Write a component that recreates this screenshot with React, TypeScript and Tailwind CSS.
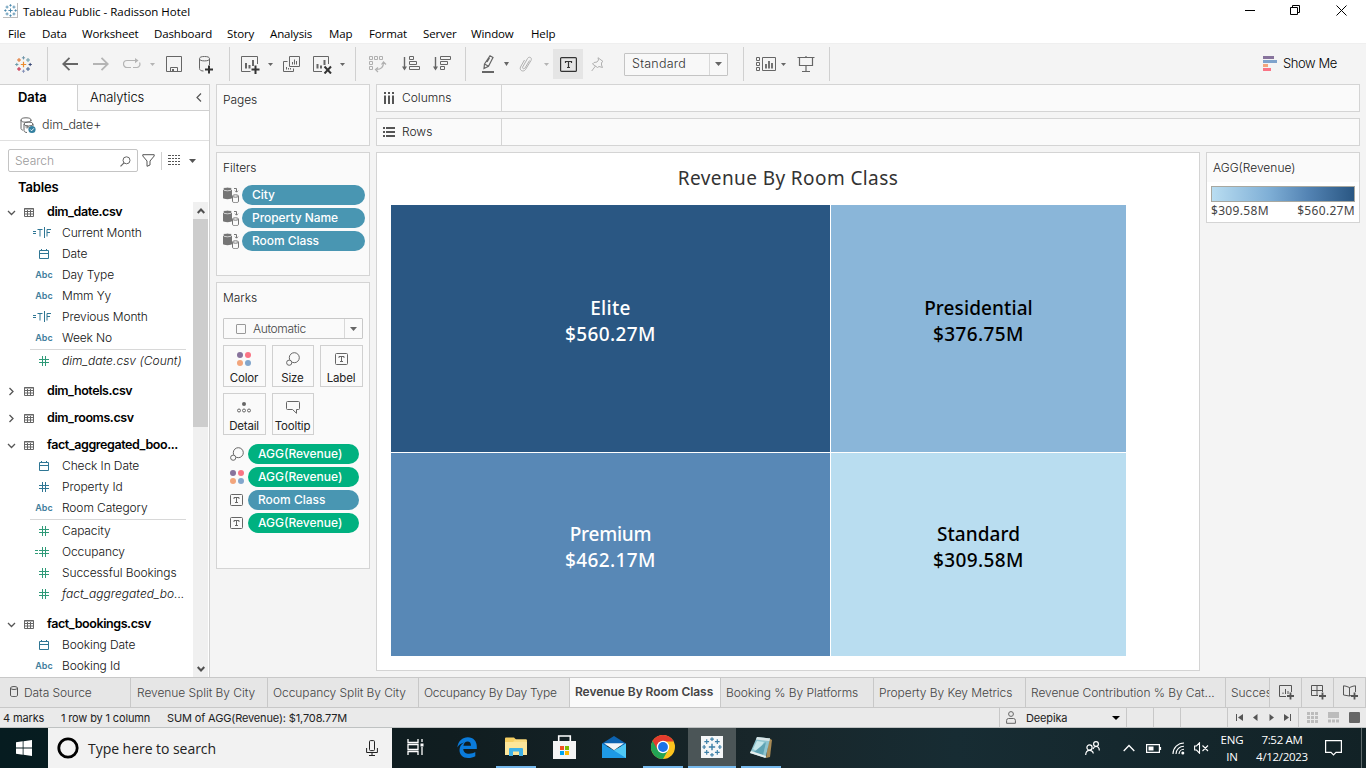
import React from 'react';

type Kids = { children?: React.ReactNode };

function Svg({ w, h, className = '', children }: { w: number; h: number; className?: string } & Kids) {
  return (
    <svg width={w} height={h} viewBox={`0 0 ${w} ${h}`} className={`block shrink-0 ${className}`} fill="none" stroke="currentColor">
      {children}
    </svg>
  );
}

/* ---------- shared icons ---------- */

function Plus({ x, y, s, c, sw = 1 }: { x: number; y: number; s: number; c: string; sw?: number }) {
  return <path d={`M${x - s} ${y}H${x + s}M${x} ${y - s}V${y + s}`} stroke={c} strokeWidth={sw} />;
}

function TableauLogo({ mono = false, size = 17 }: { mono?: boolean; size?: number }) {
  const c = mono
    ? ['#3c7fa6', '#3c7fa6', '#3c7fa6', '#3c7fa6', '#3c7fa6', '#3c7fa6', '#3c7fa6', '#3c7fa6', '#3c7fa6']
    : ['#eb8a2e', '#6b9ca8', '#8591b8', '#e0722a', '#3f5c8c', '#c6203e', '#3b4a78', '#6f95a8', '#7a6d9a'];
  return (
    <svg width={size} height={size} viewBox="0 0 17 17" className="block shrink-0" fill="none">
      <Plus x={8.5} y={8.5} s={2.7} c={c[0]} sw={1.2} />
      <Plus x={4} y={4} s={2} c={c[3]} />
      <Plus x={13} y={4} s={2} c={c[1]} />
      <Plus x={4} y={13} s={2} c={c[5]} />
      <Plus x={13} y={13} s={2} c={c[4]} />
      <Plus x={8.5} y={1.8} s={1.6} c={c[7]} />
      <Plus x={8.5} y={15.2} s={1.6} c={c[2]} />
      <Plus x={1.8} y={8.5} s={1.6} c={c[1]} />
      <Plus x={15.2} y={8.5} s={1.6} c={c[6]} />
    </svg>
  );
}

function Caret({ className = 'text-[#666]', w = 6, h = 4 }: { className?: string; w?: number; h?: number }) {
  return (
    <Svg w={w} h={h} className={className}>
      <path d={`M0 0H${w}L${w / 2} ${h}Z`} fill="currentColor" stroke="none" />
    </Svg>
  );
}

function Slot({ className, children }: { className: string } & Kids) {
  return <div className={`flex h-full shrink-0 items-center justify-center ${className}`}>{children}</div>;
}

function Sep({ className = '' }: { className?: string }) {
  return <div className={`h-[34px] w-px shrink-0 bg-[#d0d0d0] ${className}`} />;
}

function TIcon({ w = 13, h = 12, className = 'text-[#666]' }: { w?: number; h?: number; className?: string }) {
  const m = Math.floor(w / 2) + 0.5;
  return (
    <Svg w={w} h={h} className={className}>
      <rect x=".5" y=".5" width={w - 1} height={h - 1} rx="1" />
      <path d={`M${m - 2.5} 5V3.5H${m + 2.5}V5M${m} 3.5V${h - 3.5}M${m - 1.5} ${h - 3.5}H${m + 1.5}`} />
    </Svg>
  );
}

function SizeIcon() {
  return (
    <Svg w={14} h={14} className="text-[#666]">
      <circle cx="8.3" cy="5.7" r="5" />
      <circle cx="3.2" cy="10.7" r="2.6" fill="#fafafa" />
    </Svg>
  );
}

function ColorIcon() {
  return (
    <Svg w={14} h={14}>
      <g stroke="none">
        <circle cx="3" cy="3" r="3" fill="#87739c" />
        <circle cx="11" cy="3" r="3" fill="#fa7485" />
        <circle cx="3" cy="11" r="3" fill="#f2a57c" />
        <circle cx="11" cy="11" r="3" fill="#82a6cc" />
      </g>
    </Svg>
  );
}

/* ---------- title and menu ---------- */

const menu: [string, string][] = [
  ['File', 'w-[34px]'],
  ['Data', 'w-[40px]'],
  ['Worksheet', 'w-[72px]'],
  ['Dashboard', 'w-[73px]'],
  ['Story', 'w-[43px]'],
  ['Analysis', 'w-[59px]'],
  ['Map', 'w-[40px]'],
  ['Format', 'w-[54px]'],
  ['Server', 'w-[48px]'],
  ['Window', 'w-[60px]'],
  ['Help', 'w-[40px]'],
];

function TitleBar() {
  return (
    <div className="flex h-6 shrink-0 items-center bg-white pl-[3px] font-['Open_Sans',sans-serif] text-[11.5px] text-black">
      <div className="mt-[-3px] flex h-[15px] w-[15px] items-center justify-center border-r border-b border-[#bbb]">
        <TableauLogo mono size={13} />
      </div>
      <span className="ml-[5px] tracking-[-0.02px]">Tableau Public - Radisson Hotel</span>
      <div className="mr-[19px] ml-auto flex items-center pb-1 text-black">
        <Svg w={10} h={11}>
          <path d="M0 5.5H10" />
        </Svg>
        <Svg w={10} h={11} className="ml-[35px]">
          <path d="M.5 2.5H7.5V9.5H.5ZM2.500 2.500V.5H9.500V7.500H7.500" />
        </Svg>
        <Svg w={11} h={11} className="ml-[36px]">
          <path d="M.5 .5L10.5 10.5M10.5 .5L.5 10.5" />
        </Svg>
      </div>
    </div>
  );
}

function MenuBar() {
  return (
    <div className="flex h-[19px] shrink-0 items-center bg-white pl-2 font-['Open_Sans',sans-serif] text-[11.5px] tracking-[-0.14px] text-black">
      {menu.map(([t, w]) => (
        <span key={t} className={`shrink-0 whitespace-nowrap ${w}`}>
          {t}
        </span>
      ))}
    </div>
  );
}

/* ---------- toolbar ---------- */

function Toolbar() {
  return (
    <div className="flex h-[41px] shrink-0 items-center border-t border-[#efefef] bg-[#f4f4f4] text-[#666]">
      <Slot className="w-[47px]">
        <TableauLogo />
      </Slot>
      <Sep />
      <Slot className="ml-[7px] w-[30px]">
        <Svg w={16} h={14}>
          <path d="M16 7H1.2M7.5 .8L1.2 7L7.5 13.2" strokeWidth="1.8" />
        </Svg>
      </Slot>
      <Slot className="w-[32px] text-[#b4b4b4]">
        <Svg w={16} h={14}>
          <path d="M0 7H14.8M8.5 .8L14.8 7L8.5 13.2" strokeWidth="1.8" />
        </Svg>
      </Slot>
      <Slot className="w-[30px] text-[#b4b4b4]">
        <Svg w={18} h={12}>
          <path d="M8 9.5H4A3.5 3.5 0 0 1 4 2.5H13M10 9.5H14A3.4 3.4 0 0 0 16.5 4.5" strokeWidth="1.2" />
          <path d="M12 0L15.5 2.6L12 5.2Z" fill="currentColor" stroke="none" />
        </Svg>
      </Slot>
      <Slot className="w-[10px]">
        <Caret className="text-[#b4b4b4]" w={5} h={3} />
      </Slot>
      <Slot className="w-[34px]">
        <Svg w={16} h={16}>
          <path d="M.5 .5H15.5V15.5H.5ZM4.5 15.5V11.5H11.5V15.5" />
          <path d="M6 13H8V15.500H6Z" fill="currentColor" stroke="none" />
        </Svg>
      </Slot>
      <Slot className="w-[30px]">
        <Svg w={16} h={18} className="mt-0.5">
          <path d="M1.500 3V12.500C1.500 14 3 15 5.500 15M11.500 3V9" />
          <ellipse cx="6.500" cy="2.700" rx="5" ry="2.200" />
          <path d="M11 9.500V17.500M7 13.500H15" stroke="#333" strokeWidth="2" />
        </Svg>
      </Slot>
      <Sep className="ml-[8px]" />
      <Slot className="ml-[6px] w-[30px]">
        <Svg w={20} h={18} className="mt-0.5">
          <path d="M9.500 15.500H.5V.5H16.500V8" />
          <path d="M5 7V12.500M8.500 9V12.500M12 4V10" strokeWidth="2" />
          <path d="M14.500 9.500V18M10.500 13.500H18.500" stroke="#333" strokeWidth="2" />
        </Svg>
      </Slot>
      <Slot className="w-[9px]">
        <Caret w={5} h={3} />
      </Slot>
      <Slot className="w-[32px]">
        <Svg w={17} h={16}>
          <path d="M6.500 .5H16.500V10.500H6.500ZM4.500 5.500H.5V15.500H10.500V12.500" />
          <path d="M9.500 6V8.500M11.500 3.500V8.500M13.500 5V8.500M3.500 11V13.500M5.500 12V13.500M7.500 12V13.500" />
        </Svg>
      </Slot>
      <Slot className="w-[30px]">
        <Svg w={19} h={18} className="mt-0.5">
          <path d="M9 15.500H.5V.5H15.500V8" />
          <path d="M4.500 8V12.500M8 9.500V12.500M11.500 4V9" strokeWidth="2" />
          <path d="M11.500 10.500L18 17.500M18 10.500L11.500 17.500" stroke="#333" strokeWidth="2" />
        </Svg>
      </Slot>
      <Slot className="w-[11px]">
        <Caret w={5} h={3} />
      </Slot>
      <Sep className="ml-[7px]" />
      <Slot className="ml-[7px] w-[30px] text-[#b0b0b0]">
        <Svg w={18} h={18}>
          <path d="M.5 1.500H3.500V4.500H.5ZM5.500 1.500H8.500V4.500H5.500ZM10.500 1.500H13.500V4.500H10.500ZM.5 6.500H3.500V9.500H.5ZM.5 11.500H3.500V14.500H.5Z" />
          <path d="M14.500 7.500C14.500 12 12 14.500 7.500 14.500M12.500 9.500L14.500 7L17 9.500M9 12.500L6.500 14.500L9 17" strokeWidth="1.200" />
        </Svg>
      </Slot>
      <Slot className="w-[35px]">
        <Svg w={18} h={16}>
          <path d="M2.500 1V13" strokeWidth="1.400" />
          <path d="M0 10.500H5L2.500 14.500Z" fill="currentColor" stroke="none" />
          <path d="M7.500 .5H11.500V3.500H7.500ZM7.500 5.500H14.500V8.500H7.500ZM7.500 10.500H17.500V13.500H7.500Z" />
        </Svg>
      </Slot>
      <Slot className="w-[28px]">
        <Svg w={18} h={16}>
          <path d="M2.500 1V13" strokeWidth="1.400" />
          <path d="M0 10.500H5L2.500 14.500Z" fill="currentColor" stroke="none" />
          <path d="M7.500 .5H17.500V3.500H7.500ZM7.500 5.500H14.500V8.500H7.500ZM7.500 10.500H11.500V13.500H7.500Z" />
        </Svg>
      </Slot>
      <Sep className="ml-[9px]" />
      <Slot className="ml-[9px] w-[26px]">
        <Svg w={14} h={18}>
          <path d="M3.500 9L9 .8L12 2.500L7.500 11.200L3 13.500ZM3.500 9L7.500 11.200M8.500 3L6 7" strokeWidth="1.200" />
          <path d="M1 17H13" strokeWidth="2" />
        </Svg>
      </Slot>
      <Slot className="w-[10px]">
        <Caret w={5} h={4} />
      </Slot>
      <Slot className="w-[29px] text-[#b0b0b0]">
        <Svg w={14} h={16}>
          <path d="M10.500 4.500L6 12C5 13.500 3 12.500 3.700 11L8.500 2.500C10 0 13.500 1.500 12 4.500L6.500 13.500C4.500 16.500 0 14.500 1.500 11L5.500 4" />
        </Svg>
      </Slot>
      <Slot className="w-[12px]">
        <Caret className="text-[#b4b4b4]" w={5} h={3} />
      </Slot>
      <div className="ml-[1px] flex h-[30px] w-[30px] shrink-0 items-center justify-center bg-[#e5e5e5]">
        <Svg w={17} h={15} className="text-[#333]">
          <rect x=".6" y=".6" width="15.800" height="13.800" rx="1" strokeWidth="1.200" />
          <path d="M5.500 6V4.500H11.500V6M8.500 4.500V10.500M7 10.500H10" strokeWidth="1.200" />
        </Svg>
      </div>
      <Slot className="w-[28px] text-[#b0b0b0]">
        <Svg w={13} h={15}>
          <path d="M7 .7L12 4.500L10.500 5.500V8L11.500 10.500L8 9.500L6.500 10.500L1.500 7L3 5.500L6 5L7.500 3ZM4.500 9L.7 14" />
        </Svg>
      </Slot>
      <div className="ml-[13px] flex h-[23px] w-[104px] shrink-0 items-stretch rounded-[1px] border border-[#c4c4c4] bg-[#f8f8f8]">
        <span className="flex w-[85px] items-center border-r border-[#d8d8d8] pl-[7px] font-['Inter',sans-serif] text-[12.500px] font-light tracking-[0.25px] text-[#333]">
          Standard
        </span>
        <span className="flex flex-1 items-center justify-center">
          <Caret w={7} h={4} />
        </span>
      </div>
      <Sep className="ml-[15px]" />
      <Slot className="ml-[8px] w-[28px]">
        <Svg w={20} h={15}>
          <path d="M.5 .5H3.500V3.500H.5ZM.5 5.500H3.500V8.500H.5ZM.5 10.500H3.500V13.500H.5ZM6.500 .5H19.500V13.500H6.500Z" />
          <path d="M10 7V11.500M13 4V11.500M16 6V11.500" strokeWidth="1.800" />
        </Svg>
      </Slot>
      <Slot className="w-[6px]">
        <Caret w={5} h={3} />
      </Slot>
      <Slot className="ml-[4px] w-[32px]">
        <Svg w={18} h={17}>
          <path d="M.5 1.500H17.500M2.500 2V9.500H15.500V2M9 10V15.500M5 15.500H13M9 0V1" strokeWidth="1.200" />
        </Svg>
      </Slot>
      <Sep className="ml-[7px]" />
      <div className="mr-[29px] ml-auto flex items-center">
        <Svg w={14} h={16}>
          <g stroke="none">
            <rect width="11" height="3" fill="#87739c" />
            <rect y="4" width="14" height="3" fill="#7fa3cc" />
            <rect y="8" width="5" height="3" fill="#f2a57c" />
            <rect y="12" width="8" height="3" fill="#fa7485" />
          </g>
        </Svg>
        <span className="ml-[6px] font-['Inter',sans-serif] text-[13px] font-light tracking-[-0.4px] text-black">Show Me</span>
      </div>
    </div>
  );
}

/* ---------- data pane ---------- */

type FieldKind = 'tf' | 'date' | 'abc' | 'num' | 'measure' | 'calc';

function FieldIcon({ kind }: { kind: FieldKind }) {
  if (kind === 'abc') return <span className="font-['Inter',sans-serif] text-[9px] font-semibold text-[#3f7d9c]">Abc</span>;
  if (kind === 'tf')
    return (
      <Svg w={18} h={11} className="mr-[5px] text-[#2f7694]">
        <path d="M0 4.500H3M0 6.500H3M4.500 2.500H9.500M7 2.500V9.500M11.500 0V11M14 9.500V2.500H18M14 5.500H17" />
      </Svg>
    );
  if (kind === 'date')
    return (
      <Svg w={10} h={10} className="text-[#2f7694]">
        <path d="M.5 1.500H9.500V9.500H.5ZM0 4.500H10M2.500 0V2M7.500 0V2" />
      </Svg>
    );
  const color = kind === 'num' ? 'text-[#2f7694]' : 'text-[#2f9a78]';
  return (
    <Svg w={14} h={10} className={`${color} mr-[4px]`}>
      <path d="M4 3.500H14M4 6.500H14M7.500 0V10M10.500 0V10" />
      {kind === 'calc' && <path d="M0 3.500H3M0 6.500H3" />}
    </Svg>
  );
}

function Field({ kind, label, italic = false }: { kind: FieldKind; label: string; italic?: boolean }) {
  return (
    <div className="flex h-[21px] shrink-0 items-center">
      <div className="flex w-[62px] justify-center pl-[26px]">
        <FieldIcon kind={kind} />
      </div>
      <span className={`text-[12px] font-light whitespace-nowrap text-[#111] ${italic ? 'tracking-[0.04px] italic' : 'tracking-[-0.1px]'}`}>
        {label}
      </span>
    </div>
  );
}

function TableRow({ label, open = false, className }: { label: string; open?: boolean; className: string }) {
  return (
    <div className={`flex shrink-0 items-center pt-[2px] ${className}`}>
      <Svg w={9} h={9} className="ml-[7px] text-[#555]">
        {open ? <path d="M1 3L4.500 6.500L8 3" strokeWidth="1.300" /> : <path d="M2.500 1L6 4.500L2.500 8" strokeWidth="1.300" />}
      </Svg>
      <Svg w={10} h={9} className="ml-[8px] text-[#666]">
        <path d="M.5 .5H9.500V8.500H.5ZM0 1H10M.5 3.500H9.500M.5 6H9.500M3.500 2V8M6.500 2V8" />
      </Svg>
      <span className="ml-[13px] text-[12.500px] font-semibold tracking-[-0.42px] whitespace-nowrap text-black">{label}</span>
    </div>
  );
}

function Divider() {
  return <div className="mt-[1px] ml-[30px] h-px w-[156px] shrink-0 bg-[#d8d8d8]" />;
}

function DataPane() {
  return (
    <div className="flex w-[210px] shrink-0 flex-col border-r border-[#d0d0d0] bg-white">
      <div className="flex h-[27px] shrink-0 text-[13px]">
        <div className="flex w-[77px] items-center border-t border-[#d0d0d0] pl-[18px] font-semibold tracking-[-0.1px] text-black">Data</div>
        <div className="flex flex-1 items-center border-t border-b border-l border-[#d0d0d0] bg-[#fafafa] pl-[12px] font-light tracking-[-0.08px] text-black">
          Analytics
          <Svg w={6} h={9} className="mr-[7px] ml-auto text-[#555]">
            <path d="M5 .5L1 4.500L5 8.500" strokeWidth="1.200" />
          </Svg>
        </div>
      </div>
      <div className="flex h-[30px] shrink-0 items-center border-b border-[#e0e0e0] pl-[20px]">
        <Svg w={16} h={17} className="text-[#666]">
          <ellipse cx="6" cy="3" rx="5" ry="2.200" />
          <path d="M1 3V11.500C1 12.500 2 13 3 13.200M11 3V4" />
          <ellipse cx="8.500" cy="7" rx="4.500" ry="2" />
          <path d="M4 7V13.500C4 14.800 5.500 15.500 7 15.500M13 7V9M5.500 10H8M7 8.500L8.500 10L7 11.500" />
          <circle cx="12" cy="12.500" r="3.600" fill="#3380a0" stroke="none" />
          <path d="M10.300 12.500L11.600 13.800L13.800 11.400" stroke="#fff" />
        </Svg>
        <span className="ml-[6px] text-[12.500px] font-light tracking-[-0.12px] text-[#333]">dim_date+</span>
      </div>
      <div className="mt-[8px] flex h-[23px] shrink-0 items-center pl-2">
        <div className="flex h-[23px] w-[130px] items-center rounded-[2px] border border-[#c4c4c4] pt-px pr-[6px] pl-[6px] text-[12px] font-light text-[#999]">
          Search
          <Svg w={11} h={11} className="ml-auto text-[#666]">
            <circle cx="6.500" cy="4.300" r="3.500" />
            <path d="M4 6.800L.5 10.300" strokeWidth="1.200" />
          </Svg>
        </div>
        <Svg w={13} h={13} className="ml-[4px] text-[#555]">
          <path d="M.8 .7H12.200V2L8 7V11L5 12.300V7L.8 2Z" />
        </Svg>
        <div className="ml-[6px] h-[18px] w-px bg-[#d0d0d0]" />
        <Svg w={12} h={10} className="mb-px ml-[6px] text-[#555]">
          <path d="M0 .5H12M0 3.500H12M0 6.500H12M0 9.500H12" strokeDasharray="3 1 2 1 2 1 2 0" />
        </Svg>
        <Caret className="ml-[9px] text-[#555]" w={7} h={4} />
      </div>
      <div className="flex h-[29px] shrink-0 items-center pt-[3px] pl-[18px] text-[13px] font-semibold tracking-[-0.15px] text-black">Tables</div>
      <div className="flex min-h-0 flex-1">
        <div className="flex w-[193px] shrink-0 flex-col overflow-hidden">
          <TableRow label="dim_date.csv" open className="h-[21px]" />
          <Field kind="tf" label="Current Month" />
          <Field kind="date" label="Date" />
          <Field kind="abc" label="Day Type" />
          <Field kind="abc" label="Mmm Yy" />
          <Field kind="tf" label="Previous Month" />
          <Field kind="abc" label="Week No" />
          <Divider />
          <Field kind="measure" label="dim_date.csv (Count)" italic />
          <TableRow label="dim_hotels.csv" className="mt-[6px] h-[27px]" />
          <TableRow label="dim_rooms.csv" className="h-[27px]" />
          <TableRow label="fact_aggregated_boo..." open className="mt-[3px] h-[21px]" />
          <Field kind="date" label="Check In Date" />
          <Field kind="num" label="Property Id" />
          <Field kind="abc" label="Room Category" />
          <Divider />
          <Field kind="measure" label="Capacity" />
          <Field kind="calc" label="Occupancy" />
          <Field kind="measure" label="Successful Bookings" />
          <Field kind="measure" label="fact_aggregated_bo..." italic />
          <TableRow label="fact_bookings.csv" open className="mt-[9px] h-[21px]" />
          <Field kind="date" label="Booking Date" />
          <Field kind="abc" label="Booking Id" />
        </div>
        <div className="mt-[1px] flex w-[15px] flex-col items-center bg-[#f0f0f0] text-[#505050]">
          <div className="flex h-[17px] items-center">
            <Svg w={8} h={6}>
              <path d="M.7 5L4 1.500L7.300 5" strokeWidth="2" />
            </Svg>
          </div>
          <div className="h-[208px] w-full bg-[#cdcdcd]" />
          <div className="mt-auto flex h-[17px] items-center">
            <Svg w={8} h={6}>
              <path d="M.7 1L4 4.500L7.300 1" strokeWidth="2" />
            </Svg>
          </div>
        </div>
      </div>
    </div>
  );
}

/* ---------- cards ---------- */

function Card({ className, title, children }: { className: string; title: string } & Kids) {
  return (
    <div className={`flex w-[154px] shrink-0 flex-col border border-[#d4d4d4] bg-[#fafafa] ${className}`}>
      <div className="flex h-[29px] shrink-0 items-center pl-[6px] text-[12px] font-light tracking-[-0.05px] text-[#222]">{title}</div>
      {children}
    </div>
  );
}

function FilterPill({ label }: { label: string }) {
  return (
    <div className="mb-[3px] flex h-5 items-center pl-[6px]">
      <Svg w={16} h={16} className="text-[#757575]">
        <path d="M0 2.500V11C0 12.500 9 12.500 9 11V2.500Z" fill="currentColor" stroke="none" />
        <ellipse cx="4.500" cy="2" rx="4.500" ry="1.800" fill="currentColor" stroke="#fafafa" strokeWidth=".7" />
        <path d="M11 1.500H13.500V5M12 3.700L13.500 5.200L15 3.700" />
        <path d="M9.500 9V14.500C9.500 16 15.500 16 15.500 14.500V9" fill="#fafafa" />
        <ellipse cx="12.500" cy="9" rx="3" ry="1.200" fill="#fafafa" />
      </Svg>
      <div className="ml-[3px] flex h-5 w-[123px] items-center rounded-full bg-[#4996b2] pl-[10px] text-[12px] font-medium tracking-[-0.05px] text-white">
        {label}
      </div>
    </div>
  );
}

function MarkButton({ label, children }: { label: string } & Kids) {
  return (
    <div className="flex h-[42px] flex-col items-center border border-[#d0d0d0] bg-[#fafafa]">
      <div className="flex h-[25px] items-center pr-px">{children}</div>
      <span className="pr-px text-[11.500px] leading-[14px] font-normal tracking-[-0.2px] text-[#222]">{label}</span>
    </div>
  );
}

function MarkPill({ label, color, children }: { label: string; color: string } & Kids) {
  return (
    <div className="mb-[3px] flex h-5 items-center pl-[13px]">
      <div className="flex w-[14px]">{children}</div>
      <div className={`ml-[4px] flex h-5 w-[111px] items-center rounded-full pl-[10px] text-[12px] font-medium text-white ${color}`}>{label}</div>
    </div>
  );
}

function Cards() {
  return (
    <div className="ml-[6px] flex w-[154px] shrink-0 flex-col">
      <Card className="h-[62px]" title="Pages" />
      <Card className="mt-[6px] h-[124px]" title="Filters">
        <div className="mt-[3px]">
          <FilterPill label="City" />
          <FilterPill label="Property Name" />
          <FilterPill label="Room Class" />
        </div>
      </Card>
      <Card className="mt-[6px] h-[287px]" title="Marks">
        <div className="mt-[6px] ml-[6px] flex h-[21px] w-[140px] shrink-0 items-stretch rounded-[1px] border border-[#c8c8c8] bg-[#fafafa]">
          <div className="flex w-[121px] items-center border-r border-[#d8d8d8] pl-[12px] text-[12px] font-light tracking-[-0.35px] text-[#444]">
            <div className="h-[10px] w-[10px] rounded-[1px] border border-[#999]" />
            <span className="ml-[7px]">Automatic</span>
          </div>
          <div className="flex flex-1 items-center justify-center">
            <Caret w={7} h={4} />
          </div>
        </div>
        <div className="mt-[6px] ml-[6px] grid grid-cols-[43px_42px_43px] gap-[6px]">
          <MarkButton label="Color">
            <ColorIcon />
          </MarkButton>
          <MarkButton label="Size">
            <SizeIcon />
          </MarkButton>
          <MarkButton label="Label">
            <TIcon />
          </MarkButton>
          <MarkButton label="Detail">
            <Svg w={14} h={11} className="mt-[2px] text-[#666]">
              <circle cx="7" cy="2" r="2" fill="currentColor" stroke="none" />
              <circle cx="2" cy="8.500" r="1.500" />
              <circle cx="7" cy="8.500" r="1.500" />
              <circle cx="12" cy="8.500" r="1.500" />
            </Svg>
          </MarkButton>
          <MarkButton label="Tooltip">
            <Svg w={14} h={13} className="mt-[2px] text-[#666]">
              <path d="M1.500 .5H12.500Q13.500 .5 13.500 1.500V7.500Q13.500 8.500 12.500 8.500H10.500V12.300L6.500 8.500H1.500Q.5 8.500 .5 7.500V1.500Q.5 .5 1.500 .5Z" />
            </Svg>
          </MarkButton>
        </div>
        <div className="mt-[9px]">
          <MarkPill label="AGG(Revenue)" color="bg-[#00b180]">
            <SizeIcon />
          </MarkPill>
          <MarkPill label="AGG(Revenue)" color="bg-[#00b180]">
            <ColorIcon />
          </MarkPill>
          <MarkPill label="Room Class" color="bg-[#4996b2]">
            <TIcon />
          </MarkPill>
          <MarkPill label="AGG(Revenue)" color="bg-[#00b180]">
            <TIcon />
          </MarkPill>
        </div>
      </Card>
    </div>
  );
}

/* ---------- view ---------- */

function Shelf({ label, children }: { label: string } & Kids) {
  return (
    <div className="mb-[6px] flex h-[28px] shrink-0 border border-[#d4d4d4] bg-[#fafafa]">
      <div className="flex w-[125px] items-center border-r border-[#d4d4d4] pl-[6px] text-[12px] font-light text-[#222]">
        {children}
        <span className="ml-[7px]">{label}</span>
      </div>
    </div>
  );
}

function Tile({ name, value, className }: { name: string; value: string; className: string }) {
  return (
    <div className={`flex flex-col items-center justify-center pb-[15px] font-['Noto_Sans',sans-serif] text-[19px] leading-[26px] font-medium ${className}`}>
      <span>{name}</span>
      <span className="tracking-[0.38px]">{value}</span>
    </div>
  );
}

function View() {
  return (
    <div className="ml-[6px] flex min-w-0 flex-1 flex-col pr-[6px]">
      <Shelf label="Columns">
        <Svg w={12} h={12} className="mb-px text-[#555]">
          <path d="M2 3.500V12M6 3.500V12M10 3.500V12M2 0V2M6 0V2M10 0V2" strokeWidth="2" />
        </Svg>
      </Shelf>
      <Shelf label="Rows">
        <Svg w={12} h={10} className="mb-px text-[#555]">
          <path d="M3 1H12M3 5H12M3 9H12M0 1H2M0 5H2M0 9H2" strokeWidth="2" />
        </Svg>
      </Shelf>
      <div className="flex">
        <div className="flex h-[519px] w-[824px] shrink-0 flex-col border border-[#d4d4d4] bg-white">
          <div className="flex h-[52px] shrink-0 items-center justify-center pb-[2px] font-['Noto_Sans',sans-serif] text-[19px] tracking-[0.4px] text-[#333]">
            Revenue By Room Class
          </div>
          <div className="ml-[14px] grid h-[451px] w-[735px] shrink-0 grid-cols-[439px_295px] grid-rows-[247px_203px] gap-px">
            <Tile name="Elite" value="$560.27M" className="bg-[#2a5783] tracking-[0.3px] text-white" />
            <Tile name="Presidential" value="$376.75M" className="bg-[#8ab6d9] tracking-[0.1px] text-black" />
            <Tile name="Premium" value="$462.17M" className="bg-[#5888b6] tracking-[-0.25px] text-white" />
            <Tile name="Standard" value="$309.58M" className="bg-[#b9ddf0] tracking-[0.05px] text-black" />
          </div>
        </div>
        <div className="ml-[6px] h-[71px] w-[154px] border border-[#d4d4d4] bg-white">
          <div className="flex h-[29px] items-center bg-[#fafafa] pl-[6px] text-[12px] font-light text-[#222]">AGG(Revenue)</div>
          <div className="mt-[4px] ml-[4px] h-[16px] w-[144px] border border-[#a8a8a0] bg-[linear-gradient(to_right,#b9ddf1,#7fafd6_40%,#5383b3_68%,#2a5783)]" />
          <div className="ml-[4px] flex w-[144px] justify-between font-['Noto_Sans',sans-serif] text-[12px] leading-[17px] tracking-[0.32px] text-[#444]">
            <span>$309.58M</span>
            <span>$560.27M</span>
          </div>
        </div>
      </div>
    </div>
  );
}

/* ---------- sheet tabs and status ---------- */

const tabs: [string, string][] = [
  ['Revenue Split By City', 'w-[137px] pl-[6px]'],
  ['Occupancy Split By City', 'w-[151px] pl-[5px]'],
  ['Occupancy By Day Type', 'w-[151px] pl-[5px] tracking-[-0.24px]'],
  ['Revenue By Room Class', 'w-[151px] pl-[5px]'],
  ['Booking % By Platforms', 'w-[153px] pl-[5px]'],
  ['Property By Key Metrics', 'w-[152px] pl-[5px]'],
  ['Revenue Contribution % By Cat...', 'w-[200px] pl-[5px]'],
  ['Succes', 'w-[44px] pl-[5px]'],
];

function SheetTabs() {
  return (
    <div className="flex h-[31px] shrink-0 border-t border-b border-[#c8c8c8] bg-[#e6e6e6] text-[12px] font-light tracking-[-0.06px] text-[#444]">
      <div className="flex w-[131px] shrink-0 items-center border-r border-[#c8c8c8] pl-[10px]">
        <Svg w={8} h={11} className="mb-[3px] text-[#555]">
          <path d="M.5 2V9.500C.5 11 7.500 11 7.500 9.500V2" />
          <ellipse cx="4" cy="2" rx="3.500" ry="1.500" />
        </Svg>
        <span className="ml-[6px]">Data Source</span>
      </div>
      {tabs.map(([t, c]) =>
        t === 'Revenue By Room Class' ? (
          <div key={t} className={`flex shrink-0 items-center border-r border-[#c8c8c8] bg-[#fafafa] pb-[2px] font-semibold whitespace-nowrap text-[#444] ${c}`}>
            {t}
          </div>
        ) : (
          <div key={t} className={`flex shrink-0 items-center overflow-hidden border-r border-[#c8c8c8] whitespace-nowrap ${c}`}>
            {t}
          </div>
        ),
      )}
      <div className="flex w-[32px] items-center justify-center border-r border-[#c8c8c8] pl-[2px] text-[#555]">
        <Svg w={16} h={15}>
          <path d="M7 11.500H.5V.5H12.500V7M4 7.500V9M6.500 4V9M9 6V9" />
          <path d="M11.500 7.500V14.500M8 11H15" strokeWidth="1.800" />
        </Svg>
      </div>
      <div className="flex w-[32px] items-center justify-center border-r border-[#c8c8c8] pl-[2px] text-[#555]">
        <Svg w={16} h={15}>
          <path d="M7 10.500H.5V.5H11.500V7M.5 5.500H11.500M6 .5V10.500" />
          <path d="M11.500 7.500V14.500M8 11H15" strokeWidth="1.800" />
        </Svg>
      </div>
      <div className="flex w-[32px] items-center justify-center border-r border-[#c8c8c8] pl-[2px] text-[#555]">
        <Svg w={16} h={15}>
          <path d="M6.500 2.500V11L.5 10V.8L3 1.200L6.500 2.500L10 1.200L12.500 .8V7M6.500 11L8 10.500" />
          <path d="M11.500 7.500V14.500M8 11H15" strokeWidth="1.800" />
        </Svg>
      </div>
    </div>
  );
}

function StatusBar() {
  return (
    <div className="flex h-[20px] shrink-0 items-stretch border-b border-[#bfc2c2] bg-[#eaeaea] text-[11px] tracking-[-0.14px] text-[#222]">
      <div className="flex w-[1000px] shrink-0 items-center border-r border-[#c8c8c8] pt-px pl-[3px] whitespace-nowrap">
        <span className="w-[58px]">4 marks</span>
        <span className="w-[106px]">1 row by 1 column</span>
        <span>SUM of AGG(Revenue): $1,708.77M</span>
      </div>
      <div className="flex w-[127px] shrink-0 items-center border-r border-[#c8c8c8] pl-[6px]">
        <Svg w={10} h={13} className="mb-px text-[#666]">
          <circle cx="5" cy="3" r="2.400" />
          <path d="M.6 12.300V9.500Q.6 7.500 2.500 7.500H7.500Q9.400 7.500 9.400 9.500V12.300Z" />
        </Svg>
        <span className="ml-[10px] pt-px text-[11px]">Deepika</span>
        <Caret className="mr-[6px] ml-auto text-black" w={8} h={4} />
      </div>
      <div className="w-[27px] border-r border-[#c8c8c8]" />
      <div className="w-[27px] border-r border-[#c8c8c8]" />
      <div className="w-[47px] border-r border-[#c8c8c8]" />
      <div className="flex w-[71px] shrink-0 items-center gap-[9px] border-r border-[#c8c8c8] pl-[8px] text-[#555]">
        <Svg w={7} h={7}>
          <path d="M.5 0V7" />
          <path d="M7 0V7L2 3.500Z" fill="currentColor" stroke="none" />
        </Svg>
        <Svg w={7} h={7}>
          <path d="M5.500 0V7L1 3.500Z" fill="currentColor" stroke="none" />
        </Svg>
        <Svg w={7} h={7}>
          <path d="M1.500 0V7L6 3.500Z" fill="currentColor" stroke="none" />
        </Svg>
        <Svg w={7} h={7}>
          <path d="M6.500 0V7" />
          <path d="M0 0V7L5 3.500Z" fill="currentColor" stroke="none" />
        </Svg>
      </div>
      <div className="flex items-center pl-[8px]">
        <Svg w={11} h={11} className="text-[#bcbcbc]">
          <path d="M0 1.500H11M0 5.500H11M0 9.500H11" strokeWidth="3" strokeDasharray="3 1" />
        </Svg>
        <Svg w={11} h={11} className="ml-[10px] text-[#bcbcbc]">
          <path d="M0 3H11" strokeWidth="6" />
          <path d="M0 9H11" strokeWidth="3" strokeDasharray="3 1" />
        </Svg>
        <div className="ml-[10px] h-[11px] w-[11px] rounded-[1px] bg-[#666]" />
      </div>
    </div>
  );
}

/* ---------- taskbar ---------- */

function TaskButton({ running = false, active = false, className, children }: { running?: boolean; active?: boolean; className: string } & Kids) {
  return (
    <div className={`flex h-full shrink-0 flex-col items-center ${active ? 'bg-[#4b5557]' : ''} ${className}`}>
      <div className="flex flex-1 items-center">{children}</div>
      <div className={`h-[2px] ${active ? 'w-full' : 'w-[40px]'} ${running ? 'bg-[#76b9ed]' : ''}`} />
    </div>
  );
}

function Taskbar() {
  return (
    <div className="flex h-[40px] shrink-0 bg-[linear-gradient(to_right,#061c20,#101d20_33%,#18262a_55%,#172c33_70%,#122226)] font-['Open_Sans',sans-serif] text-white">
      <div className="flex w-[48px] shrink-0 items-center justify-center">
        <Svg w={16} h={16}>
          <path d="M0 2.200L6.700 1.300V7.500H0ZM7.500 1.200L16 0V7.500H7.500ZM0 8.500H6.700V14.700L0 13.800ZM7.500 8.500H16V16L7.500 14.800Z" fill="#fff" stroke="none" />
        </Svg>
      </div>
      <div className="flex w-[344px] shrink-0 items-center bg-[#f2f2f2] pl-[9px] text-[#222]">
        <Svg w={22} h={22} className="text-black">
          <circle cx="11" cy="11" r="9.200" strokeWidth="2.800" />
        </Svg>
        <span className="ml-[9px] text-[14px] tracking-[-0.04px]">Type here to search</span>
        <Svg w={12} h={16} className="mr-[14px] ml-auto">
          <rect x="3.500" y=".6" width="5" height="10" rx="1" />
          <path d="M.6 8V12.500H11.400V8M6 12.500V15.500M3 15.500H9" />
        </Svg>
      </div>
      <TaskButton className="w-[47px]">
        <Svg w={17} h={16}>
          <path d="M1 0V3.500H11V0M1 5.500H11V10.500H1ZM1 16V12.500H11V16M15 0V3M15 8V16" strokeWidth="1.300" />
          <path d="M13.500 4.500H16.500V7.500H13.500Z" fill="#fff" stroke="none" />
        </Svg>
      </TaskButton>
      <TaskButton className="ml-[4px] w-[48px]">
        <Svg w={20} h={21}>
          <path
            d="M.3 10.500C1.200 4 5.500 .3 10.800 .3C16.500 .3 19.800 4.500 19.800 9.500V12H6.300C6.500 15.500 9 16.800 12 16.800C14.500 16.800 16.500 16.200 18.300 15.100V19.200C16.300 20.400 13.800 21 11 21C5.700 21 2.500 17.700 2.500 13C2.500 9.600 4.300 6.900 7.300 5.400C4 5.900 1.700 7.800 .3 10.500ZM6.400 8.700H14C14 6 12.800 4.500 10.600 4.500C8.400 4.500 6.900 6.100 6.400 8.700Z"
            fill="#0a7bdb"
            stroke="none"
          />
        </Svg>
      </TaskButton>
      <TaskButton running className="ml-[1px] w-[48px]">
        <Svg w={22} h={20}>
          <g stroke="none">
            <path d="M0 1.500Q0 .5 1 .5H9L11 2.500H21Q22 2.500 22 3.500V18H0Z" fill="#f6cf62" />
            <path d="M0 5H22V18H0Z" fill="#fde69a" />
            <path d="M10 2.500H21.500V5H8Z" fill="#fbdc80" />
            <path d="M4 19V12Q4 11 5 11H17Q18 11 18 12V19H14V14.500H8V19Z" fill="#3fb2e8" />
          </g>
        </Svg>
      </TaskButton>
      <TaskButton className="w-[48px]">
        <Svg w={23} h={24}>
          <path d="M5.700 8V1H17.300V8" stroke="#fff" strokeWidth="1.600" />
          <path d="M0 6H23V24H0Z" fill="#f4f4f4" stroke="none" />
          <g stroke="none">
            <rect x="7" y="11" width="4" height="4" fill="#f25022" />
            <rect x="12" y="11" width="4" height="4" fill="#7fba00" />
            <rect x="7" y="16" width="4" height="4" fill="#00a4ef" />
            <rect x="12" y="16" width="4" height="4" fill="#ffb900" />
          </g>
        </Svg>
      </TaskButton>
      <TaskButton className="ml-[2px] w-[48px]">
        <Svg w={24} h={22}>
          <g stroke="none">
            <path d="M0 7.500L12 0L24 7.500V10H0Z" fill="#0d63b0" />
            <path d="M0 7.500L12 14.500L24 7.500V22H0Z" fill="#1e9ae6" />
            <path d="M24 7.500L12 14.500L24 22Z" fill="#4fc8f5" />
            <path d="M2 7.200H22L12 14.200Z" fill="#f3f6f8" />
          </g>
        </Svg>
      </TaskButton>
      <TaskButton running className="ml-[1px] w-[48px]">
        <Svg w={24} h={24}>
          <g stroke="none">
            <circle cx="12" cy="12" r="12" fill="#fcc31e" />
            <path d="M12 12L1.600 6A12 12 0 0 0 12 24L17.200 15Z" fill="#23a455" />
            <path d="M1.600 6A12 12 0 0 1 22.400 6L22.400 6.600H12L6.800 15Z" fill="#e33b2e" />
            <circle cx="12" cy="12" r="6.200" fill="#fff" />
            <circle cx="12" cy="12" r="4.900" fill="#1a73e8" />
          </g>
        </Svg>
      </TaskButton>
      <TaskButton running active className="ml-[1px] w-[48px]">
        <div className="flex h-[22px] w-[22px] items-center justify-center bg-[#f5f7f8]">
          <TableauLogo mono size={20} />
        </div>
      </TaskButton>
      <TaskButton running className="ml-[1px] w-[48px]">
        <Svg w={24} h={22}>
          <g stroke="none">
            <path d="M20 2L23 4L21 21L17 22Z" fill="#a88a55" />
            <path d="M8 1L21 2.500L16.500 22L1 17Z" fill="#8ec4cf" />
            <path d="M8 1L21 2.500L20.300 5L7 3.500Z" fill="#d8e4e6" />
            <path d="M8 5L15 6L9 16L4 13Z" fill="#c4e6ea" />
            <path d="M17 6L14 19L5 16Z" fill="#5ea3b4" />
            <path d="M1 17L16.500 22L17 20L2 15Z" fill="#e6eeee" />
          </g>
        </Svg>
      </TaskButton>
      <div className="ml-auto flex items-center">
        <Svg w={15} h={15} className="mr-[15px]">
          <circle cx="4.500" cy="6.500" r="2.600" strokeWidth="1.200" />
          <path d="M.7 14C.7 11 2 9.300 4.500 9.300C6.500 9.300 8 10.500 8.300 12.500" strokeWidth="1.200" />
          <circle cx="11" cy="3" r="2.400" strokeWidth="1.200" />
          <path d="M8 8C8.500 6.500 9.500 5.500 11 5.500C13 5.500 14.300 7 14.300 9.500" strokeWidth="1.200" />
        </Svg>
        <Svg w={12} h={8} className="mr-[11px] ml-[8px]">
          <path d="M.7 7L6 1.500L11.300 7" strokeWidth="1.300" />
        </Svg>
        <Svg w={16} h={9}>
          <path d="M.6 .6H13.400V8.400H.6ZM14.500 3V6" strokeWidth="1.200" />
          <path d="M2.500 2.500H7.500V6.500H2.500Z" fill="#fff" stroke="none" />
        </Svg>
        <Svg w={13} h={13} className="ml-[10px]">
          <path d="M1 12A11 11 0 0 1 12 1M4 12A8 8 0 0 1 12 4.200M7 12A5 5 0 0 1 12 7.200" strokeWidth="1.100" />
          <circle cx="10.800" cy="11" r="1.500" fill="#fff" stroke="none" />
        </Svg>
        <Svg w={15} h={12} className="ml-[9px]">
          <path d="M.6 4H2.500L5.500 .8V11.200L2.500 8H.6ZM8.500 3.500L14 9M14 3.500L8.500 9" strokeWidth="1.100" />
        </Svg>
        <div className="ml-[6px] flex w-[34px] flex-col items-center text-[11.500px] leading-[17px] tracking-[-0.2px]">
          <span>ENG</span>
          <span>IN</span>
        </div>
        <div className="flex w-[66px] flex-col items-center text-[11.500px] leading-[17px] tracking-[-0.3px] whitespace-nowrap">
          <span>7:52 AM</span>
          <span>4/12/2023</span>
        </div>
        <Svg w={17} h={16} className="ml-[10px]">
          <path d="M.6 .6H16.400V12.400H11L8.500 15L6 12.400H.6Z" strokeWidth="1.200" />
        </Svg>
        <div className="mr-[4px] ml-[19px] h-[40px] w-px bg-[#5f6a6c]" />
      </div>
    </div>
  );
}

export default function App() {
  return (
    <div className="flex h-[768px] w-[1366px] flex-col overflow-hidden bg-[#f4f4f4] font-['Inter',sans-serif]">
      <TitleBar />
      <MenuBar />
      <Toolbar />
      <div className="flex h-[593px] shrink-0">
        <DataPane />
        <Cards />
        <View />
      </div>
      <SheetTabs />
      <StatusBar />
      <Taskbar />
    </div>
  );
}
